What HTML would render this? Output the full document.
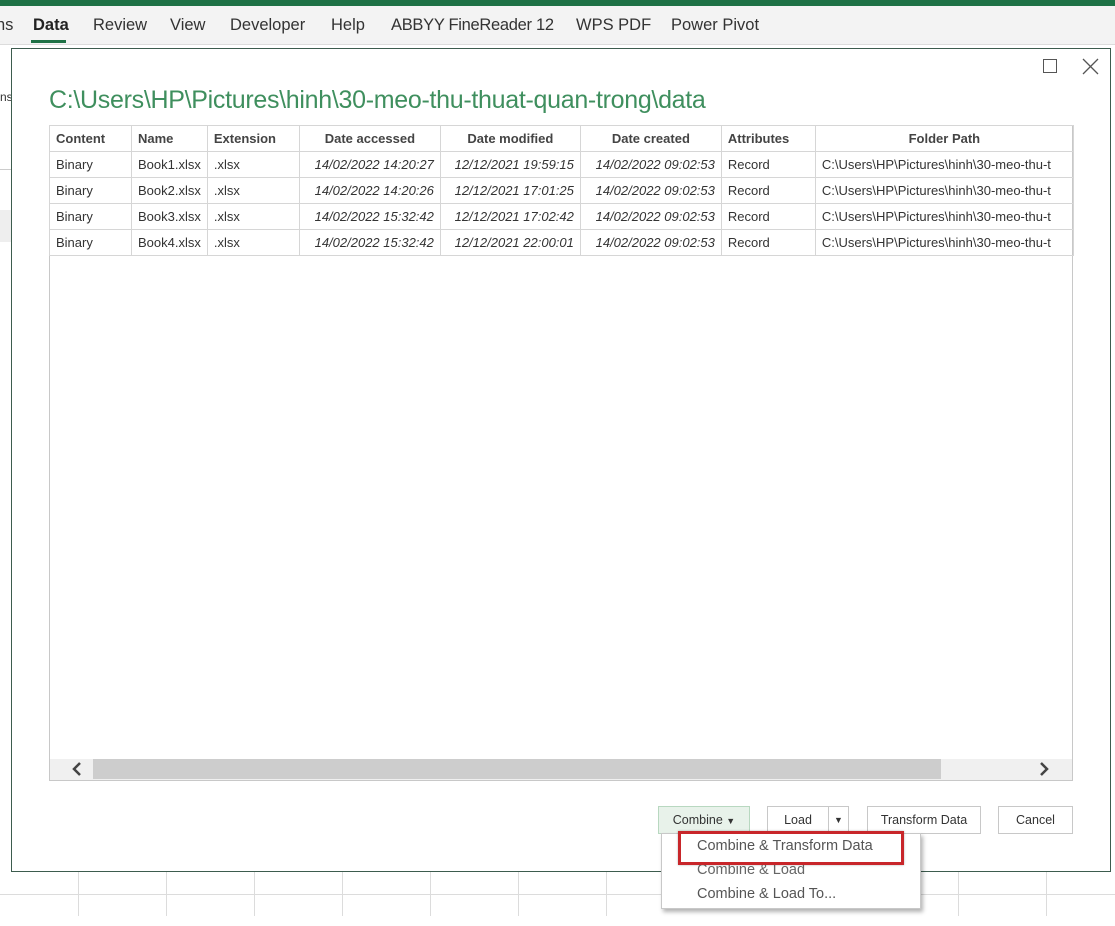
<!DOCTYPE html>
<html><head><meta charset="utf-8"><style>
*{margin:0;padding:0;box-sizing:border-box}
body{width:1115px;height:926px;overflow:hidden;background:#fff;position:relative;font-family:"Liberation Sans",sans-serif;color:#222}
.abs{position:absolute}
.tab{position:absolute;top:16px;font-size:16.5px;color:#333}
.grid{position:absolute;background:#dcdcdc}
table{border-collapse:collapse;font-size:13px;position:absolute;left:49px;top:125px;table-layout:fixed}
td,th{border:1px solid #d6d6d6;height:26px;padding:0 6px;white-space:nowrap;overflow:hidden;text-align:left;color:#333}
th{font-weight:bold;color:#444}
td.i{font-style:italic;text-align:right}
.btn{position:absolute;top:806px;height:28px;border:1px solid #c8c8c8;background:#fff;font-size:12.5px;color:#333;text-align:center;line-height:27px}
</style></head><body>
<div class="abs" style="left:0;top:0;width:1115px;height:6px;background:#1e7145"></div>
<div class="abs" style="left:0;top:6px;width:1115px;height:39px;background:#f3f3f3;border-bottom:1px solid #dcdcdc"></div>
<div class="tab" style="left:-4px">ns</div>
<div class="tab" style="left:33px;font-weight:bold;color:#222">Data</div>
<div class="abs" style="left:31px;top:40px;width:35px;height:3px;background:#1e7145"></div>
<div class="tab" style="left:93px">Review</div>
<div class="tab" style="left:170px">View</div>
<div class="tab" style="left:230px">Developer</div>
<div class="tab" style="left:331px">Help</div>
<div class="tab" style="left:391px;letter-spacing:-0.3px">ABBYY FineReader 12</div>
<div class="tab" style="left:576px">WPS PDF</div>
<div class="tab" style="left:671px">Power Pivot</div>
<div class="abs" style="left:0;top:90px;font-size:12px;color:#333">ns</div>
<div class="abs" style="left:0;top:169px;width:11px;height:1px;background:#ccc"></div>
<div class="abs" style="left:0;top:210px;width:11px;height:32px;background:#eee"></div>
<div class="grid" style="left:0;top:894px;width:1115px;height:1px"></div>
<div class="grid" style="left:78px;top:871px;width:1px;height:45px"></div>
<div class="grid" style="left:166px;top:871px;width:1px;height:45px"></div>
<div class="grid" style="left:254px;top:871px;width:1px;height:45px"></div>
<div class="grid" style="left:342px;top:871px;width:1px;height:45px"></div>
<div class="grid" style="left:430px;top:871px;width:1px;height:45px"></div>
<div class="grid" style="left:518px;top:871px;width:1px;height:45px"></div>
<div class="grid" style="left:606px;top:871px;width:1px;height:45px"></div>
<div class="grid" style="left:958px;top:871px;width:1px;height:45px"></div>
<div class="grid" style="left:1046px;top:871px;width:1px;height:45px"></div>
<div class="abs" style="left:11px;top:48px;width:1100px;height:824px;background:#fff;border:1px solid #3d5c4e"></div>
<div class="abs" style="left:1043px;top:59px;width:14px;height:14px;border:1px solid #555"></div>
<svg class="abs" style="left:1082px;top:58px" width="17" height="17"><path d="M1 1 L16 16 M16 1 L1 16" stroke="#555" stroke-width="1.3"/></svg>
<div class="abs" style="left:49px;top:86px;font-size:25px;color:#3f8f5e;letter-spacing:-0.3px">C:\Users\HP\Pictures\hinh\30-meo-thu-thuat-quan-trong\data</div>
<div class="abs" style="left:49px;top:125px;width:1024px;height:656px;border:1px solid #c8c8c8"></div>
<table>
<colgroup><col style="width:82px"><col style="width:75px"><col style="width:92px"><col style="width:141px"><col style="width:140px"><col style="width:141px"><col style="width:94px"><col style="width:258px"></colgroup>
<tr><th>Content</th><th>Name</th><th>Extension</th><th style="text-align:center">Date accessed</th><th style="text-align:center">Date modified</th><th style="text-align:center">Date created</th><th>Attributes</th><th style="text-align:center">Folder Path</th></tr>
<tr><td>Binary</td><td>Book1.xlsx</td><td>.xlsx</td><td class="i">14/02/2022 14:20:27</td><td class="i">12/12/2021 19:59:15</td><td class="i">14/02/2022 09:02:53</td><td>Record</td><td>C:\Users\HP\Pictures\hinh\30-meo-thu-t</td></tr>
<tr><td>Binary</td><td>Book2.xlsx</td><td>.xlsx</td><td class="i">14/02/2022 14:20:26</td><td class="i">12/12/2021 17:01:25</td><td class="i">14/02/2022 09:02:53</td><td>Record</td><td>C:\Users\HP\Pictures\hinh\30-meo-thu-t</td></tr>
<tr><td>Binary</td><td>Book3.xlsx</td><td>.xlsx</td><td class="i">14/02/2022 15:32:42</td><td class="i">12/12/2021 17:02:42</td><td class="i">14/02/2022 09:02:53</td><td>Record</td><td>C:\Users\HP\Pictures\hinh\30-meo-thu-t</td></tr>
<tr><td>Binary</td><td>Book4.xlsx</td><td>.xlsx</td><td class="i">14/02/2022 15:32:42</td><td class="i">12/12/2021 22:00:01</td><td class="i">14/02/2022 09:02:53</td><td>Record</td><td>C:\Users\HP\Pictures\hinh\30-meo-thu-t</td></tr>
</table>
<div class="abs" style="left:50px;top:759px;width:1022px;height:21px;background:#f0f0f0"></div>
<div class="abs" style="left:93px;top:759px;width:848px;height:20px;background:#cdcdcd"></div>
<svg class="abs" style="left:70px;top:762px" width="14" height="14"><path d="M10 1 L4 7 L10 13" stroke="#444" stroke-width="2.5" fill="none"/></svg>
<svg class="abs" style="left:1037px;top:762px" width="14" height="14"><path d="M4 1 L10 7 L4 13" stroke="#444" stroke-width="2.5" fill="none"/></svg>
<div class="btn" style="left:658px;width:92px;background:#e8f2ea;border-color:#b8d8c0">Combine <span style="font-size:9px">▼</span></div>
<div class="btn" style="left:767px;width:62px">Load</div>
<div class="btn" style="left:828px;width:21px;font-size:9px">▼</div>
<div class="btn" style="left:867px;width:114px">Transform Data</div>
<div class="btn" style="left:998px;width:75px">Cancel</div>
<div class="abs" style="left:661px;top:833px;width:260px;height:76px;background:#fff;border:1px solid #c8c8c8;box-shadow:2px 3px 4px rgba(0,0,0,.3)"></div>
<div class="abs" style="left:697px;top:838px;font-size:14.5px;color:#555">Combine &amp; Transform Data</div>
<div class="abs" style="left:697px;top:862px;font-size:14.5px;color:#666">Combine &amp; Load</div>
<div class="abs" style="left:697px;top:886px;font-size:14.5px;color:#555">Combine &amp; Load To...</div>
<div class="abs" style="left:678px;top:831px;width:226px;height:34px;border:3px solid #c8262a;box-shadow:0 0 2px rgba(0,0,0,.3)"></div>
</body></html>
